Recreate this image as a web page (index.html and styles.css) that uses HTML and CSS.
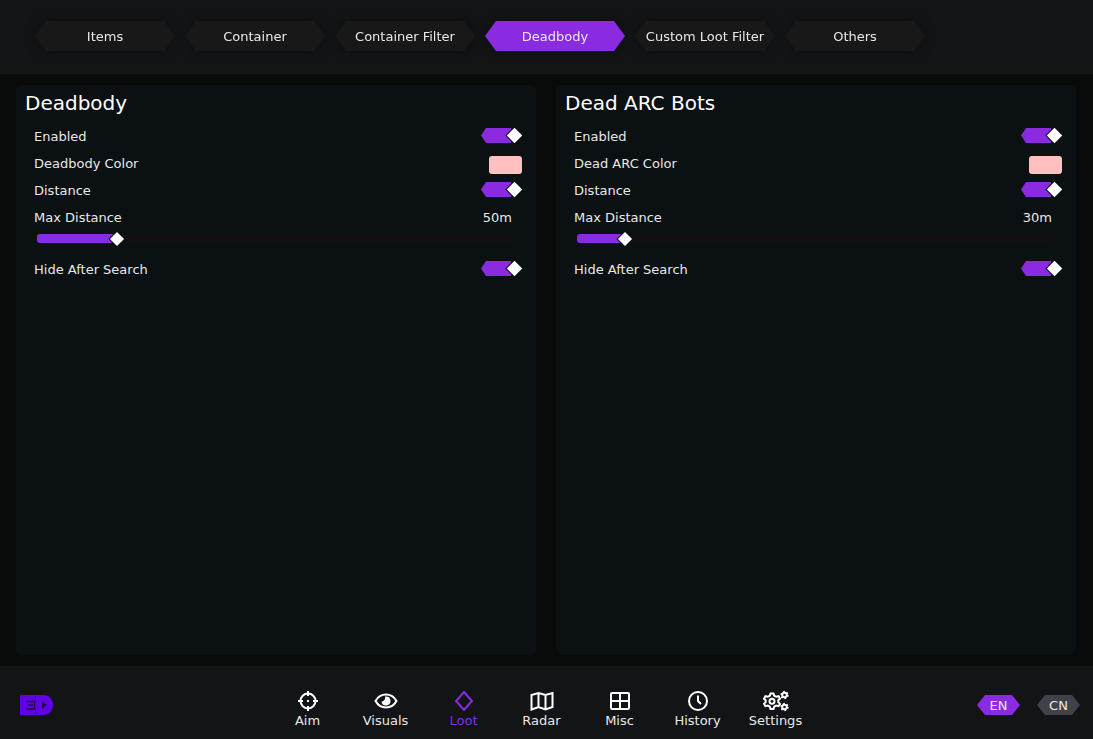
FILE: index.html
```
<!DOCTYPE html>
<html lang="en">
<head>
  <meta charset="UTF-8" />
  <meta name="viewport" content="width=device-width, initial-scale=1.0"/>
  <title>Loot - Deadbody</title>
  <link rel="stylesheet" href="styles.css">
</head>
<body>
  <header class="header">
    <nav class="tabs">
      <button class="tab">Items</button>
      <button class="tab">Container</button>
      <button class="tab">Container Filter</button>
      <button class="tab active">Deadbody</button>
      <button class="tab">Custom Loot Filter</button>
      <button class="tab">Others</button>
    </nav>
  </header>

  <main class="panels">
    <section class="panel">
      <h2>Deadbody</h2>
      <div class="row">
        <label for="body-enabled">Enabled</label>
        <input type="checkbox" class="toggle" id="body-enabled" checked />
      </div>
      <div class="row">
        <label for="body-color">Deadbody Color</label>
        <input type="color" class="swatch" id="body-color" value="#ffc0c0" />
      </div>
      <div class="row">
        <label for="body-distance">Distance</label>
        <input type="checkbox" class="toggle" id="body-distance" checked />
      </div>
      <div class="row">
        <label for="body-max">Max Distance</label>
        <output class="value" for="body-max">50m</output>
      </div>
      <div class="slider">
        <span class="slider-fill" style="width: 16.67%"></span>
        <input type="range" id="body-max" min="0" max="300" value="50" />
      </div>
      <div class="row">
        <label for="body-hide">Hide After Search</label>
        <input type="checkbox" class="toggle" id="body-hide" checked />
      </div>
    </section>

    <section class="panel">
      <h2>Dead ARC Bots</h2>
      <div class="row">
        <label for="arc-enabled">Enabled</label>
        <input type="checkbox" class="toggle" id="arc-enabled" checked />
      </div>
      <div class="row">
        <label for="arc-color">Dead ARC Color</label>
        <input type="color" class="swatch" id="arc-color" value="#ffc0c0" />
      </div>
      <div class="row">
        <label for="arc-distance">Distance</label>
        <input type="checkbox" class="toggle" id="arc-distance" checked />
      </div>
      <div class="row">
        <label for="arc-max">Max Distance</label>
        <output class="value" for="arc-max">30m</output>
      </div>
      <div class="slider">
        <span class="slider-fill" style="width: 10%"></span>
        <input type="range" id="arc-max" min="0" max="300" value="30" />
      </div>
      <div class="row">
        <label for="arc-hide">Hide After Search</label>
        <input type="checkbox" class="toggle" id="arc-hide" checked />
      </div>
    </section>
  </main>

  <footer class="footer">
    <svg class="logo" viewBox="0 0 34 20" width="34" height="20">
      <path d="M1 0H24C30 0 34 4 34 10S30 20 24 20H1Z" fill="#6200e6"/>
      <path d="M7 6.500H15.500V14H7M9 10.200H14" fill="none" stroke="#1d0a40" stroke-width="1.400"/>
      <path d="M16.500 1V19" stroke="#4a00b0" stroke-width="1"/>
      <path d="M23 5.500L27.500 10L23 14.500Z" fill="#1d0a40"/>
    </svg>

    <nav class="menu">
      <button class="menu-item">
        <svg viewBox="0 0 24 24" width="24" height="24">
          <circle cx="12" cy="12" r="7.500"/>
          <path d="M12 2V7M12 17V22M2 12H7M17 12H22M11 12H13"/>
        </svg>
        Aim
      </button>
      <button class="menu-item">
        <svg viewBox="0 0 24 24" width="24" height="24">
          <path d="M1.500 12C4 7.500 7.500 5.500 12 5.500S20 7.500 22.500 12C20 16.500 16.500 18.500 12 18.500S4 16.500 1.500 12Z"/>
          <path class="solid" d="M12 7.500A4.500 4.500 0 1 1 7.500 12.500C8.500 12.500 9.500 12 10 11.500C11 10.500 11.500 9 11 7.600Z"/>
        </svg>
        Visuals
      </button>
      <button class="menu-item active">
        <svg viewBox="0 0 24 24" width="24" height="24">
          <path d="M12 3L20 12L12 21L4 12Z"/>
        </svg>
        Loot
      </button>
      <button class="menu-item">
        <svg viewBox="0 0 24 24" width="24" height="24">
          <path d="M1.500 6L8.500 4L15.500 6L22.500 4V18L15.500 20.500L8.500 18L1.500 20.500ZM8.500 4V18M15.500 6V20.500"/>
        </svg>
        Radar
      </button>
      <button class="menu-item">
        <svg viewBox="0 0 24 24" width="24" height="24">
          <rect x="3" y="4" width="18" height="16" rx="1"/>
          <path d="M12 4V20M3 12H21"/>
        </svg>
        Misc
      </button>
      <button class="menu-item">
        <svg viewBox="0 0 24 24" width="24" height="24">
          <circle cx="12" cy="12" r="9"/>
          <path d="M12 6.500V12L15 15"/>
        </svg>
        History
      </button>
      <button class="menu-item">
        <svg viewBox="0 0 26 24" width="26" height="24">
          <path d="M7.500 4.500H10.500L11.200 6.700L13.200 7.800L15.600 7.200L17 9.700L15.300 11.300V13.100L17 14.800L15.600 17.200L13.200 16.600L11.200 17.700L10.500 20H7.500L6.800 17.700L4.800 16.600L2.400 17.200L1 14.800L2.700 13.100V11.300L1 9.700L2.400 7.200L4.800 7.800L6.800 6.700Z"/>
          <circle cx="9" cy="12.200" r="2.500"/>
          <circle cx="21.500" cy="6" r="2.300"/>
          <circle cx="21.500" cy="18" r="2.300"/>
          <circle class="cog" cx="21.500" cy="6" r="3.200"/>
          <circle class="cog" cx="21.500" cy="18" r="3.200"/>
        </svg>
        Settings
      </button>
    </nav>

    <div class="langs">
      <button class="lang active">EN</button>
      <button class="lang">CN</button>
    </div>
  </footer>
</body>
</html>
```
FILE: styles.css
```
* {
  box-sizing: border-box;
}
body {
  margin: 0;
  min-height: 100vh;
  display: flex;
  flex-direction: column;
  background: #090a0a;
  color: #e8e8e8;
  font-family: "DejaVu Sans", Verdana, sans-serif;
  font-size: 13px;
}
button {
  padding: 0;
  border: none;
  background: none;
  color: inherit;
  font: inherit;
  cursor: pointer;
}

/* top tabs */
.header {
  padding: 21px 35px 22px;
  background: #121415;
  border-bottom: 1px solid #161717;
}
.tabs {
  display: flex;
  gap: 10px;
  filter: drop-shadow(0 0 6px #0e0e0e);
}
.tab {
  width: 140px;
  height: 30px;
  background: #181818;
  white-space: nowrap;
  clip-path: polygon(11px 0, calc(100% - 11px) 0, 100% 50%, calc(100% - 11px) 100%, 11px 100%, 0 50%);
}
.tab.active {
  background: #8a2be2;
}

/* panels */
.panels {
  flex: 1;
  display: grid;
  grid-template-columns: 1fr 1fr;
  gap: 20px;
  padding: 11px 17px 11px 16px;
}
.panel {
  padding: 0 14px 0 18px;
  background: #0b1013;
  border-radius: 6px;
}
h2 {
  margin: 0 0 2px -9px;
  color: #fff;
  font-size: 20px;
  font-weight: normal;
  line-height: 36px;
}
.row {
  display: flex;
  align-items: center;
  justify-content: space-between;
  height: 27px;
}
.value {
  margin-right: 10px;
}
.swatch {
  width: 33px;
  height: 18px;
  margin: 2px 0 0;
  padding: 0;
  border: none;
  border-radius: 3px;
  background: none;
  overflow: hidden;
}
.swatch::-webkit-color-swatch-wrapper {
  padding: 0;
}
.swatch::-webkit-color-swatch {
  border: none;
}
.toggle {
  appearance: none;
  position: relative;
  width: 41px;
  height: 15px;
  margin: 0 0 2px;
}
.toggle::before {
  content: "";
  display: block;
  width: 30px;
  height: 15px;
  background: #8a2be2;
  clip-path: polygon(5px 0, 100% 0, 100% 100%, 5px 100%, 0 50%);
}
.toggle::after {
  content: "";
  position: absolute;
  top: 2px;
  right: 2px;
  width: 11px;
  height: 11px;
  background: #fff;
  box-shadow: 0 0 0 1px #0b1013;
  transform: rotate(45deg);
}

.slider {
  display: grid;
  align-items: center;
  height: 15px;
  margin: 0 8px 10px 3px;
  background: linear-gradient(#110f11, #110f11) center / 100% 9px no-repeat;
}
.slider-fill {
  grid-area: 1 / 1;
  height: 9px;
  background: #8a2be2;
  border-radius: 3px;
}
.slider input {
  grid-area: 1 / 1;
  appearance: none;
  width: calc(100% + 10px);
  height: 15px;
  margin: 0 -5px;
  background: none;
}
.slider input::-webkit-slider-thumb {
  appearance: none;
  width: 10px;
  height: 10px;
  background: #fff;
  box-shadow: 0 0 0 1px #0b1013;
  transform: rotate(45deg);
}

/* bottom bar */
.footer {
  display: grid;
  grid-template-columns: 1fr auto 1fr;
  align-items: center;
  height: 73px;
  padding: 4px 13px 0 3px;
  background: #121415;
  border-top: 1px solid #161717;
}
.logo {
  margin-left: 16px;
}
.menu {
  display: flex;
  padding-top: 7px;
}
.menu-item {
  display: flex;
  flex-direction: column;
  align-items: center;
  width: 78px;
  line-height: 16px;
}
.menu-item svg {
  fill: none;
  stroke: #fff;
  stroke-width: 2;
}
.menu-item .solid {
  fill: #fff;
  stroke: none;
}
.menu-item .cog {
  stroke-dasharray: 1.600 1.750;
}
.menu-item.active {
  color: #8a2be2;
}
.menu-item.active svg {
  stroke: #8a2be2;
}
.langs {
  display: flex;
  justify-content: flex-end;
  gap: 17px;
}
.lang {
  width: 43px;
  height: 20px;
  background: #41414b;
  clip-path: polygon(8px 0, calc(100% - 8px) 0, 100% 50%, calc(100% - 8px) 100%, 8px 100%, 0 50%);
}
.lang.active {
  background: #8a2be2;
}
```
